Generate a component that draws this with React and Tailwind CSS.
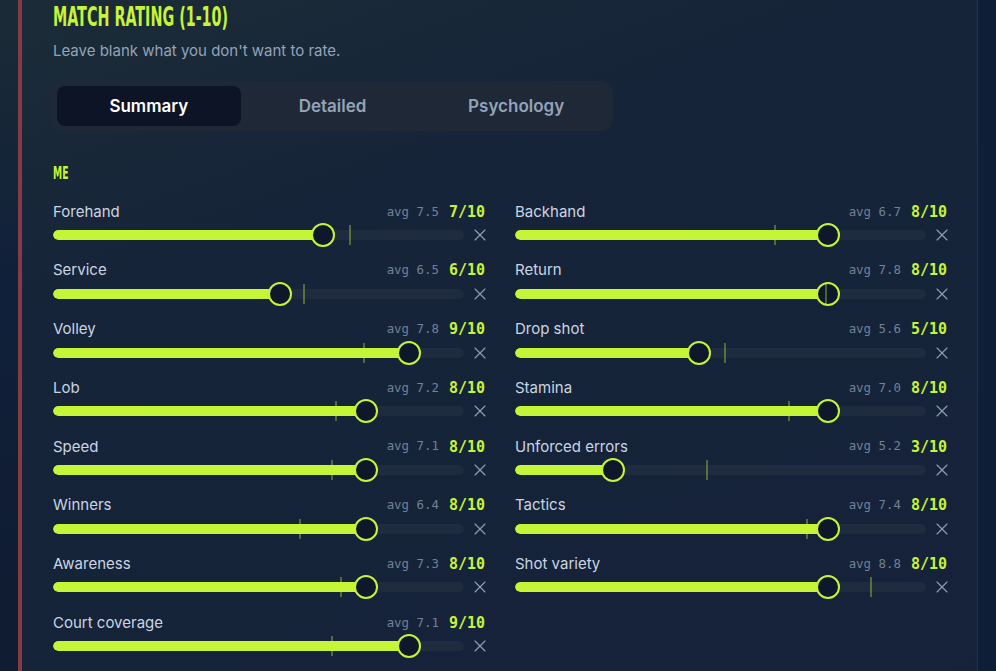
import React, { useState } from 'react';
import { X } from 'lucide-react';

const left = [
  { name: 'Forehand', avg: 7.5, value: 7 },
  { name: 'Service', avg: 6.5, value: 6 },
  { name: 'Volley', avg: 7.8, value: 9 },
  { name: 'Lob', avg: 7.2, value: 8 },
  { name: 'Speed', avg: 7.1, value: 8 },
  { name: 'Winners', avg: 6.4, value: 8 },
  { name: 'Awareness', avg: 7.3, value: 8 },
  { name: 'Court coverage', avg: 7.1, value: 9 },
];

const right = [
  { name: 'Backhand', avg: 6.7, value: 8 },
  { name: 'Return', avg: 7.8, value: 8 },
  { name: 'Drop shot', avg: 5.6, value: 5 },
  { name: 'Stamina', avg: 7.0, value: 8 },
  { name: 'Unforced errors', avg: 5.2, value: 3 },
  { name: 'Tactics', avg: 7.4, value: 8 },
  { name: 'Shot variety', avg: 8.8, value: 8 },
];

// scale is 1..10
const frac = (v) => (v - 1) / 9;

function RatingRow({ name, avg, value }) {
  const f = frac(value);
  const a = frac(avg);
  return (
    <div className="flex flex-col">
      <div className="h-[22px] flex items-center justify-between">
        <span className="text-[15px] text-[#cbd5e1] font-['Inter',sans-serif]">{name}</span>
        <div className="flex items-center gap-[10px] font-['DejaVu_Sans_Mono',monospace]">
          <span className="text-[12.4px] text-[#718196]">avg {avg.toFixed(1)}</span>
          <span className="text-[15px] font-bold text-[#c6f436]">{value}/10</span>
        </div>
      </div>
      <div className="flex items-center h-[24.7px]">
        <div className="relative flex-1 h-full">
          <div className="absolute inset-x-0 top-1/2 -translate-y-1/2 h-2.5 rounded-full bg-[#1f2b3e] overflow-hidden">
            <div
              className="h-full rounded-full bg-[#c6f436]"
              style={{ width: `calc(12px + ${f} * (100% - 24px))` }}
            />
          </div>
          <div
            className="absolute top-1/2 -translate-y-1/2 w-6 h-6 rounded-full bg-[#0f172a] border-2 border-[#c6f436]"
            style={{ left: `calc(${f} * (100% - 24px))` }}
          />
          {/* average marker sits over the thumb */}
          <div
            className="absolute top-1/2 -translate-y-1/2 w-[2px] h-5 bg-[#c6f436]/35"
            style={{ left: `calc(${a * 100}% - 1px)` }}
          />
        </div>
        <div className="w-[10px] ml-[11px] flex items-center justify-center">
          <X size={20} strokeWidth={1.4} className="text-[#8d9bb0] shrink-0" />
        </div>
      </div>
    </div>
  );
}

export default function App() {
  const [tab, setTab] = useState('Summary');
  const tabs = ['Summary', 'Detailed', 'Psychology'];

  return (
    <div className="min-h-screen flex bg-[linear-gradient(180deg,#1b2b36_0%,#11203a_40%,#0f1b30_100%)] font-['Inter',sans-serif]">
      <div className="w-[18px] shrink-0" />
      <div className="w-[960px] shrink-0 border-l-4 border-l-[#853a46] border-r border-r-[#243349] bg-[linear-gradient(160deg,#1b2c37_0%,#162439_30%,#15223a_100%)] pl-[31px] pr-[30px] pb-10">
        <div className="mt-[4px] h-[26px] leading-[26px]">
          <span className="inline-block origin-left scale-x-[0.59] font-['DejaVu_Sans_Condensed',sans-serif] font-bold text-[27px] uppercase text-[#c6f436] whitespace-nowrap">
            Match Rating (1-10)
          </span>
        </div>
        <p className="mt-[11px] leading-[20px] text-[15px] text-[#94a3b8]">
          Leave blank what you don't want to rate.
        </p>

        <div className="mt-[20px] w-[561px] h-[50px] p-[5px] rounded-xl bg-[#1e2837] grid grid-cols-3 -ml-[1px]">
          {tabs.map((t) => (
            <button
              key={t}
              onClick={() => setTab(t)}
              className={
                t === tab
                  ? 'rounded-lg bg-[#0c1426] text-white text-[17px] font-semibold pt-[2px]'
                  : 'rounded-lg text-[#94a3b8] text-[17px] font-semibold pt-[2px]'
              }
            >
              {t}
            </button>
          ))}
        </div>

        <div className="mt-[36px] h-[13px] leading-[13px]">
          <span className="inline-block origin-left scale-x-[0.6] font-['DejaVu_Sans_Condensed',sans-serif] font-bold text-[17px] text-[#c6f436]">
            ME
          </span>
        </div>

        <div className="mt-[21px] grid grid-cols-2 gap-x-[30px]">
          <div className="flex flex-col gap-y-[12px]">
            {left.map((r) => (
              <RatingRow key={r.name} {...r} />
            ))}
          </div>
          <div className="flex flex-col gap-y-[12px]">
            {right.map((r) => (
              <RatingRow key={r.name} {...r} />
            ))}
          </div>
        </div>
      </div>
      <div className="flex-1 bg-[#0f1e37]" />
    </div>
  );
}
